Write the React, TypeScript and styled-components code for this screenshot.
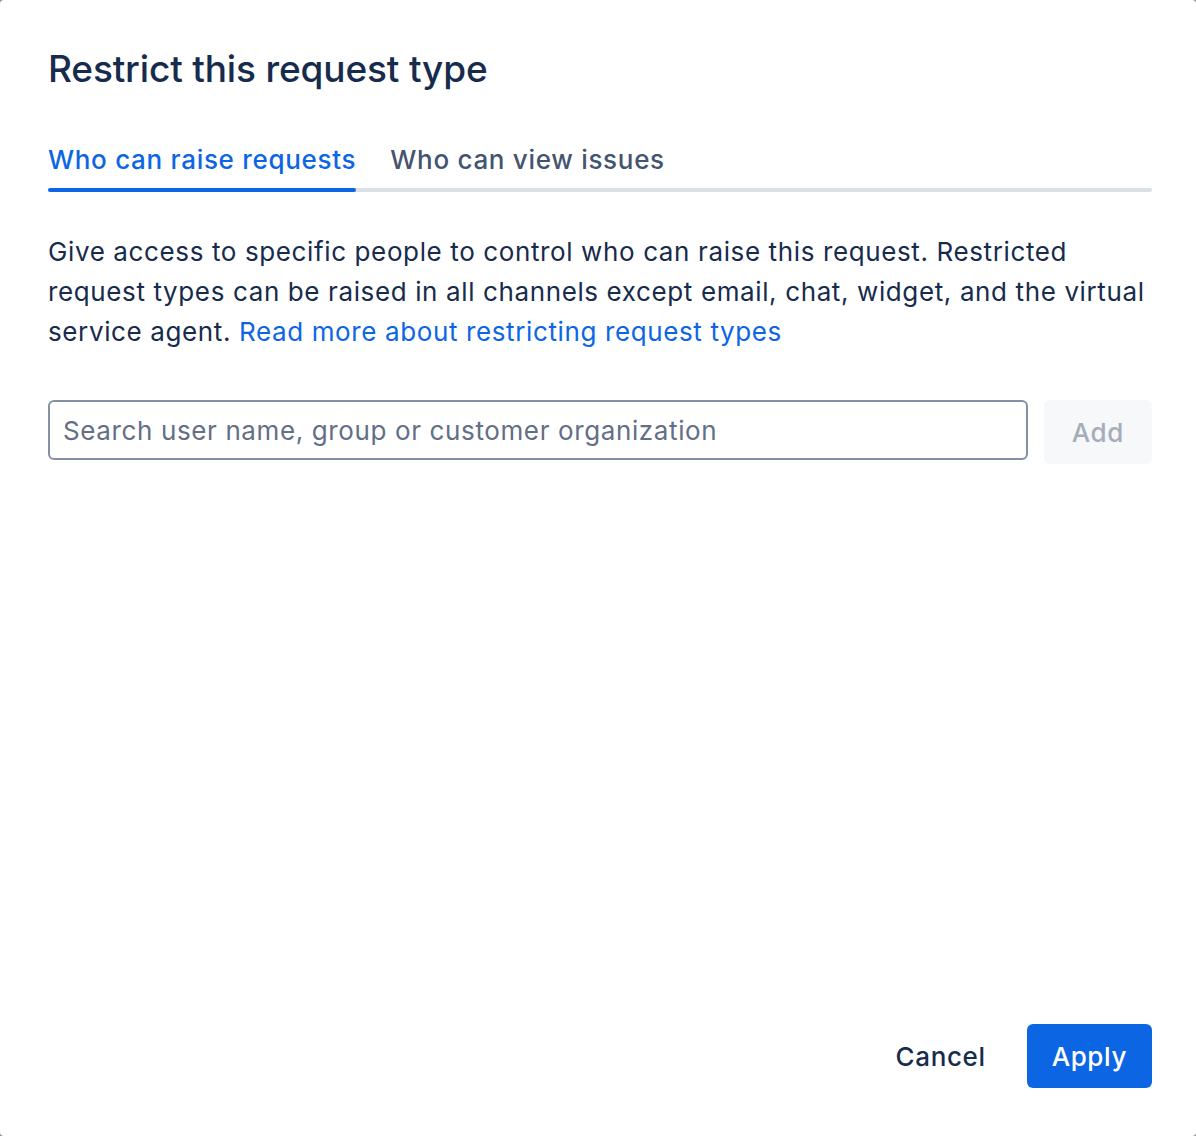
import React from "react";
import styled, { createGlobalStyle } from "styled-components";

const GlobalStyle = createGlobalStyle`
  html, body {
    margin: 0;
    padding: 0;
    background: #8590a2;
  }
  body {
    font-family: Inter, "Noto Sans", "Liberation Sans", sans-serif;
    -webkit-font-smoothing: antialiased;
  }
  * { box-sizing: border-box; }
`;

const Modal = styled.div`
  width: 1196px;
  height: 1136px;
  background: #ffffff;
  border-radius: 4px;
  display: flex;
  flex-direction: column;
  padding: 45px 44px 48px 48px;
  color: #172b4d;
  letter-spacing: 0.62px;
`;

const Title = styled.h1`
  margin: 0;
  font-size: 37px;
  line-height: 48px;
  font-weight: 500;
  color: #172b4d;
  letter-spacing: -0.15px;
`;

const TabList = styled.div`
  position: relative;
  display: flex;
  gap: 34px;
  margin-top: 49px;
  &::after {
    content: "";
    position: absolute;
    left: 0;
    right: 0;
    bottom: 0;
    height: 4px;
    border-radius: 2px;
    background: #dcdfe4;
  }
`;

const Tab = styled.button<{ $active?: boolean }>`
  position: relative;
  z-index: 1;
  border: 0;
  background: none;
  padding: 0 0 14px 0;
  margin: 0;
  font-family: inherit;
  font-size: 26px;
  line-height: 36px;
  font-weight: 500;
  letter-spacing: 0.7px;
  color: ${(p) => (p.$active ? "#0c66e4" : "#44546f")};
  cursor: pointer;
  &::after {
    content: "";
    position: absolute;
    left: 0;
    right: 0;
    bottom: 0;
    height: 4px;
    border-radius: 2px;
    background: ${(p) => (p.$active ? "#0c66e4" : "transparent")};
  }
`;

const Description = styled.p`
  margin: 40px 0 0 0;
  font-size: 26px;
  line-height: 40px;
  color: #172b4d;
`;

const Link = styled.a`
  color: #0c66e4;
  text-decoration: none;
`;

const SearchRow = styled.div`
  display: flex;
  align-items: flex-start;
  gap: 16px;
  margin-top: 48px;
`;

const SearchInput = styled.input`
  flex: 1;
  height: 60px;
  border: 2px solid #8590a2;
  border-radius: 6px;
  padding: 0 13px;
  font-family: inherit;
  font-size: 26px;
  letter-spacing: 0.62px;
  color: #172b4d;
  outline: none;
  &::placeholder {
    color: #626f86;
  }
`;

const Button = styled.button<{ $variant: "primary" | "subtle" | "disabled" }>`
  height: 64px;
  border: 0;
  border-radius: 6px;
  padding: 0 ${(p) => (p.$variant === "disabled" ? 28 : 25)}px;
  font-family: inherit;
  font-size: 26px;
  font-weight: 500;
  letter-spacing: 0.62px;
  cursor: pointer;
  background: ${(p) =>
    p.$variant === "primary" ? "#0c66e4" : p.$variant === "disabled" ? "#f7f8f9" : "transparent"};
  color: ${(p) =>
    p.$variant === "primary" ? "#ffffff" : p.$variant === "disabled" ? "#a5adba" : "#172b4d"};
`;

const Spacer = styled.div`
  flex: 1;
`;

const Footer = styled.div`
  display: flex;
  justify-content: flex-end;
  gap: 16px;
`;

export default function App() {
  return (
    <>
      <GlobalStyle />
      <Modal>
        <Title>Restrict this request type</Title>
        <TabList>
          <Tab $active>Who can raise requests</Tab>
          <Tab>Who can view issues</Tab>
        </TabList>
        <Description>
          Give access to specific people to control who can raise this request. Restricted request
          types can be raised in all channels except email, chat, widget, and the virtual service
          agent. <Link href="#">Read more about restricting request types</Link>
        </Description>
        <SearchRow>
          <SearchInput placeholder="Search user name, group or customer organization" />
          <Button $variant="disabled" disabled>
            Add
          </Button>
        </SearchRow>
        <Spacer />
        <Footer>
          <Button $variant="subtle">Cancel</Button>
          <Button $variant="primary">Apply</Button>
        </Footer>
      </Modal>
    </>
  );
}
